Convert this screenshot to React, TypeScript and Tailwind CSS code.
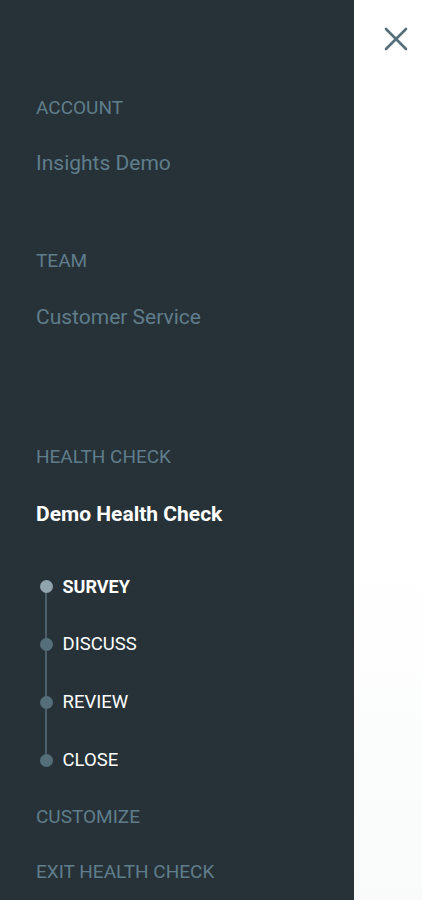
import React from "react";

const steps = [
  { label: "SURVEY", active: true },
  { label: "DISCUSS", active: false },
  { label: "REVIEW", active: false },
  { label: "CLOSE", active: false },
];

const App = () => {
  return (
    <main
      className="flex w-[422px] h-[900px] overflow-hidden bg-white"
      style={{ fontFamily: "Roboto, 'Liberation Sans', sans-serif" }}
    >
      {/* サイドメニュー */}
      <nav className="w-[354px] h-full bg-[#263238] pl-[36px] pt-[80px] flex flex-col">
        <div className="h-[56px] flex items-center text-[19px] text-[#607d8b]">ACCOUNT</div>
        <div className="h-[57px] flex items-center text-[21px] text-[#607d8b]">Insights Demo</div>

        <div className="mt-[41px] h-[56px] flex items-center text-[19px] text-[#607d8b]">TEAM</div>
        <div className="h-[57px] flex items-center text-[21px] text-[#607d8b]">Customer Service</div>

        <div className="mt-[83px] h-[56px] flex items-center text-[19px] text-[#607d8b]">HEALTH CHECK</div>
        <div className="mt-[2px] h-[57px] flex items-center text-[21px] font-bold text-white">
          Demo Health Check
        </div>

        {/* ステップ一覧 */}
        <ul className="mt-[14px] relative">
          <span className="absolute left-[9px] top-[29px] h-[174px] w-[2px] bg-[#4b606c]" />
          {steps.map((step) => (
            <li key={step.label} className="h-[58px] flex items-center relative">
              <span
                className={`w-[13px] h-[13px] rounded-full ${
                  step.active ? "bg-[#90a4ae]" : "bg-[#546e7a]"
                }`}
                style={{ marginLeft: 3.5 }}
              />
              <span
                className={`ml-[10px] ${
                  step.active ? "text-[18px] font-bold text-white" : "text-[18.5px] font-normal text-white"
                }`}
              >
                {step.label}
              </span>
            </li>
          ))}
        </ul>

        <div className="mt-[1px] h-[54px] flex items-center text-[19px] text-[#607d8b]">CUSTOMIZE</div>
        <div className="h-[56px] flex items-center text-[19px] text-[#607d8b]">EXIT HEALTH CHECK</div>
      </nav>

      {/* 右側 */}
      <section className="flex-1 h-full bg-gradient-to-b from-white from-[62%] to-[#f9fafa] relative">
        <button className="absolute left-[30px] top-[27px] w-[24px] h-[24px]">
          <svg viewBox="0 0 24 24" width="24" height="24">
            <path d="M2 2 L22 22 M22 2 L2 22" stroke="#546e7a" strokeWidth="2.6" strokeLinecap="round" />
          </svg>
        </button>
      </section>
    </main>
  );
};

export default App;
